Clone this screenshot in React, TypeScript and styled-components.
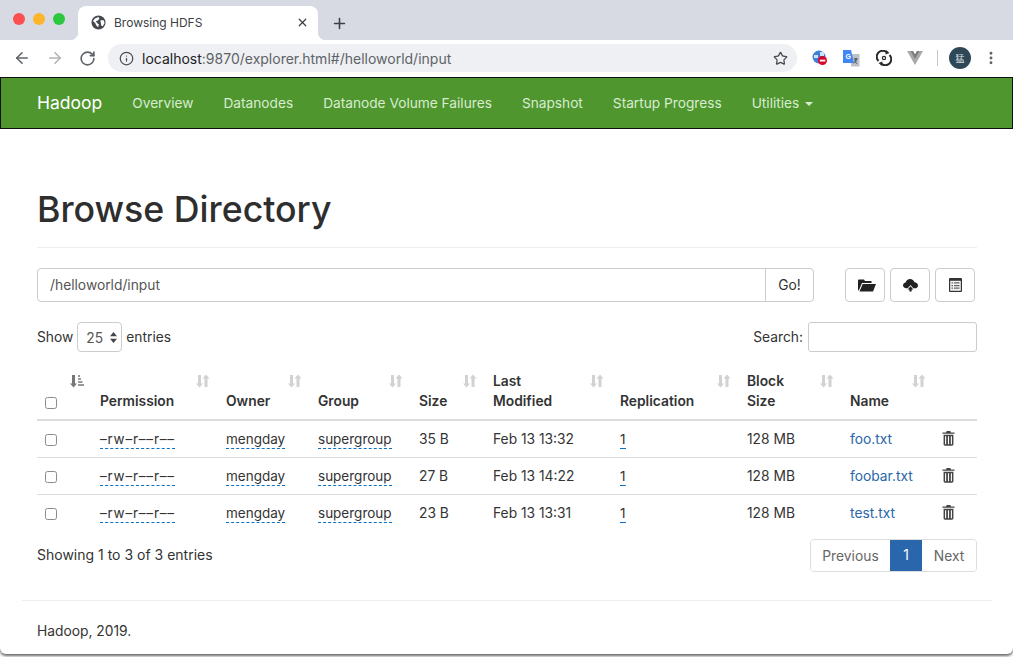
import React from 'react';
import styled, { createGlobalStyle } from 'styled-components';
import { ArrowLeft, ArrowRight, RotateCw, Info, Star, Plus, X, MoreVertical } from 'lucide-react';

const Global = createGlobalStyle`
  html, body { margin: 0; padding: 0; background: #fff; height: 657px; overflow: hidden; }
  * { box-sizing: border-box; }
  body { font-family: Inter, "Liberation Sans", Arial, sans-serif; font-size: 13.8px; color: #333; }
`;

const Windowed = styled.div`
  height: 654px; background: #fff; border-radius: 0 0 6px 6px; overflow: hidden;
  box-shadow: 0 2px 3px 0 rgba(0,0,0,.6);
`;
const TabStrip = styled.div`
  height: 40px; background: #d7dae3; display: flex; align-items: flex-end; padding-left: 13px;
`;
const Lights = styled.div`
  display: flex; gap: 8px; align-self: flex-start; margin-top: 13px; width: 65px;
`;
const Light = styled.span<{ $c: string }>`
  width: 12px; height: 12px; border-radius: 50%; background: ${p => p.$c};
`;
const Tab = styled.div`
  position: relative; width: 240px; height: 34px; background: #fff; border-radius: 8px 8px 0 0;
  display: flex; align-items: center; padding: 0 9px 2px 13px; color: #3c4043; font-size: 12px;
  &::before, &::after { content: ''; position: absolute; bottom: 0; width: 8px; height: 8px; }
  &::before { left: -8px; background: radial-gradient(circle at 0 0, transparent 8px, #fff 8.5px); }
  &::after { right: -8px; background: radial-gradient(circle at 100% 0, transparent 8px, #fff 8.5px); }
`;
const TabTitle = styled.span` margin-left: 8px; flex: 1; `;
const NewTab = styled.div` margin-left: 13px; height: 34px; display: flex; align-items: center; color: #3c4043; `;
const Toolbar = styled.div`
  height: 36px; background: #fff; display: flex; align-items: center; padding: 0 0 0 13px; color: #5f6368;
`;
const NavGlyphs = styled.div` display: flex; align-items: center; gap: 15px; width: 95px; `;
const Omni = styled.div`
  width: 689px; height: 28px; background: #eef0f3; border-radius: 14px; display: flex; align-items: center;
  padding: 0 9px 0 11px; font-size: 14px; color: #5f6368;
`;
const OmniText = styled.span` margin-left: 8px; flex: 1; b { font-weight: 400; color: #202124; } `;
const Exts = styled.div`
  display: flex; align-items: center; margin-left: 15px; height: 100%;
`;
const ExtSlot = styled.span<{ $w: number }>` display: flex; width: ${p => p.$w}px; align-items: center; `;
const Sep = styled.span` width: 1px; height: 16px; background: #c4c6c9; `;
const Avatar = styled.span`
  width: 22px; height: 22px; border-radius: 50%; background: #2f4858; color: #dfe5e8; font-size: 9px;
  display: flex; align-items: center; justify-content: center; margin-left: 11px;
  font-family: "Noto Sans CJK SC", sans-serif;
`;
const Dots = styled.span` display: flex; margin-left: 12px; color: #5f6368; `;

const Navbar = styled.nav`
  margin-top: 1px; height: 52px; background: #4f962f; border: 1px solid #101010; display: flex; align-items: center; padding-left: 36px;
`;
const Brand = styled.a` color: #fff; font-size: 17.5px; margin-right: 15px; line-height: 20px; `;
const NavLink = styled.a`
  color: #d9ecd0; font-size: 13.7px; padding: 0 15px; line-height: 20px; display: flex; align-items: center;
`;
const Caret = styled.i`
  display: inline-block; margin-left: 6px; width: 0; height: 0; margin-top: 2px;
  border-top: 4px solid #d9ecd0; border-left: 4px solid transparent; border-right: 4px solid transparent;
`;
const Container = styled.div` margin: 0 21px 0 22px; `;
const Inner = styled.div` padding: 0 15px; `;
const Header = styled.div` margin-top: 59px; padding-bottom: 16px; border-bottom: 1px solid #eee; `;
const Title = styled.h1` margin: 0; font-size: 35.7px; font-weight: 500; line-height: 43px; color: #2e2e2e; `;
const PathRow = styled.div` display: flex; margin-top: 20px; align-items: center; `;
const PathInput = styled.div`
  width: 729px; height: 34px; border: 1px solid #ccc; border-radius: 4px 0 0 4px; padding: 0 12px;
  line-height: 32px; color: #555;
`;
const GoButton = styled.div`
  width: 49px; height: 34px; margin-left: -1px; border: 1px solid #ccc; border-radius: 0 4px 4px 0;
  text-align: center; line-height: 32px; color: #333;
`;
const Tools = styled.div` display: flex; gap: 5px; margin-left: 31px; `;
const ToolBtn = styled.div`
  width: 40px; height: 34px; border: 1px solid #ccc; border-radius: 4px; display: flex; align-items: center; justify-content: center; color: #222;
`;
const Controls = styled.div` display: flex; justify-content: space-between; align-items: center; margin-top: 20px; height: 30px; `;
const Label = styled.div` display: flex; align-items: center; gap: 4px; line-height: 28px; `;
const SelectBox = styled.div`
  position: relative; width: 45px; height: 30px; border: 1px solid #ccc; border-radius: 4px; padding-left: 8px; line-height: 30px; color: #555;
`;
const SelectArrows = styled.svg` position: absolute; right: 4px; top: 9px; `;
const SearchBox = styled.div` width: 169px; height: 30px; margin-left: 1px; border: 1px solid #ccc; border-radius: 3px; `;
const Table = styled.table`
  width: 940px; border-collapse: collapse; table-layout: fixed; margin-top: 11px;
`;
const Th = styled.th<{ $w: number }>`
  position: relative; width: ${p => p.$w}px; text-align: left; vertical-align: bottom; font-weight: 600;
  padding: 8px 20px 8px 8px; line-height: 20px; border-bottom: 2px solid #ddd; color: #333;
`;
const SortGlyph = styled.svg` position: absolute; right: 8px; top: 11px; `;
const Td = styled.td`
  padding: 8px; line-height: 20px; height: 37px; border-bottom: 1px solid #ddd; vertical-align: top;
  tr:last-child & { border-bottom: none; }
`;
const Check = styled.span`
  display: block; width: 12px; height: 12px; border: 1px solid #8b8b8b; border-radius: 2.5px; background: #fff; margin-top: 5px;
`;
const HeadCheck = styled(Check)` margin-bottom: 2px; `;
const Editable = styled.span`
  font-size: 13.5px; border-bottom: 1px dashed #0c70c4; padding-bottom: 1px;
`;
const Perm = styled(Editable)`
  letter-spacing: .8px;
`;
const NameLink = styled.a` color: #2a66ab; `;
const TrashWrap = styled.span` display: block; height: 15px; margin-top: 2px; `;
const Bottom = styled.div` display: flex; justify-content: space-between; align-items: flex-start; margin-top: 7px; height: 61px; `;
const Info2 = styled.div` font-size: 14px; line-height: 20px; margin-top: 6px; `;
const Pager = styled.div` display: flex; height: 33px; border: 1px solid #ddd; border-radius: 4px; overflow: hidden; color: #666; `;
const PageBtn = styled.div<{ $active?: boolean; $w: number }>`
  width: ${p => p.$w}px; text-align: center; line-height: 33px;
  background: ${p => (p.$active ? '#2a66ab' : '#fff')}; color: ${p => (p.$active ? '#fff' : '#666')};
  margin: ${p => (p.$active ? '-1px 0' : '0')}; height: ${p => (p.$active ? '33px' : 'auto')};
`;
const Foot = styled.footer` border-top: 1px solid #eee; padding: 20px 15px 0; line-height: 20px; `;

const sortIdle = (
  <SortGlyph width="14" height="14" viewBox="0 0 14 14" fill="#d2d2d2">
    <path d="M2 1h3v8.500h2L3.500 13.500 0 9.500h2zM10 .5 13.500 4.500h-2V13h-3V4.500h-2z" />
  </SortGlyph>
);
const sortAsc = (
  <SortGlyph width="14" height="14" viewBox="0 0 14 14">
    <path fill="#777" d="M2 1h3v8.500h2L3.500 13.500 0 9.500h2z" />
    <path fill="#999" d="M8 1h2v2H8zM8 4h3v2H8zM8 7h4.500v2H8zM8 10h6v2H8z" />
  </SortGlyph>
);
const Trash = () => (
  <svg width="13" height="15" viewBox="0 0 14 16" fill="#444">
    <path d="M5 0h4l.6 1.500H13.500v1.500H.5V1.500h3.900zM1.700 4h10.600v10.300c0 .8-.7 1.400-1.500 1.400H3.200c-.8 0-1.500-.6-1.500-1.400z" />
    <path fill="#fff" d="M3.300 5.500h1.200v8.700H3.300zM6.400 5.500h1.200v8.700H6.400zM9.500 5.500h1.200v8.700H9.500z" />
  </svg>
);
const OffsetIcon = styled.span` display: flex; margin-left: 3px; `;

const rows = [
  { size: '35 B', date: 'Feb 13 13:32', name: 'foo.txt' },
  { size: '27 B', date: 'Feb 13 14:22', name: 'foobar.txt' },
  { size: '23 B', date: 'Feb 13 13:31', name: 'test.txt' },
];

export default function App() {
  return (
    <Windowed>
      <Global />
      <TabStrip>
        <Lights>
          <Light $c="#fc4f4f" /><Light $c="#fdb52a" /><Light $c="#2bc73f" />
        </Lights>
        <Tab>
          <svg width="15" height="15" viewBox="0 0 16 16">
            <circle cx="8" cy="8" r="7.500" fill="#45484d" />
            <path fill="#fff" d="M2 6.500 4.500 3.500 8 2 9 4 7 6 5 6.500 7 9 8.500 10 7.500 13 5.500 11 4.500 8.500zM10 5.500l3.500 0 1 3-2 3.500-1.500-.5-.5-3z" />
          </svg>
          <TabTitle>Browsing HDFS</TabTitle>
          <X size={13} color="#3c4043" strokeWidth={2.2} />
        </Tab>
        <NewTab><Plus size={17} strokeWidth={2.2} /></NewTab>
      </TabStrip>
      <Toolbar>
        <NavGlyphs>
          <ArrowLeft size={18} strokeWidth={2.1} />
          <ArrowRight size={18} strokeWidth={2.1} color="#b0b2b5" />
          <RotateCw size={17} strokeWidth={2.3} />
        </NavGlyphs>
        <Omni>
          <Info size={15} strokeWidth={2} color="#4a4d52" />
          <OmniText><b>localhost</b>:9870/explorer.html#/helloworld/input</OmniText>
          <Star size={15} strokeWidth={2} color="#45484d" />
        </Omni>
        <Exts>
          <ExtSlot $w={31}>
            <svg width="16" height="16" viewBox="0 0 16 16">
              <circle cx="7" cy="7" r="6.500" fill="#3f7fd9" />
              <path fill="#cfe0f7" d="M2 5h4v3H2zM8 2h4v4H8z" />
              <circle cx="10.500" cy="10.500" r="4.500" fill="#d9062a" />
              <rect x="7.800" y="9.700" width="5.500" height="1.800" fill="#fff" />
            </svg>
          </ExtSlot>
          <ExtSlot $w={33}>
            <svg width="17" height="17" viewBox="0 0 17 17">
              <path fill="#bcc1c6" d="M8 4h8.500v12.500H8z" />
              <path fill="#5a6068" d="m11 8 3.500 0v1l-1.500 3 1.500 1.500-.7.500-1.600-1.500-1.500 1-.5-.6 1.500-1.200L11.500 9.500z" />
              <path fill="#4285f4" d="M0 0h8l3 13H0z" />
              <text x="2.500" y="9" fontSize="7" fontWeight="700" fill="#fff" fontFamily="Liberation Sans">G</text>
            </svg>
          </ExtSlot>
          <ExtSlot $w={31}>
            <svg width="16" height="16" viewBox="0 0 16 16" fill="none" stroke="#2b2b2b" strokeWidth="2">
              <path d="M2.500 11A6 6 0 0 1 11 2.500" />
              <path d="M13.500 5A6 6 0 0 1 5 13.500" />
              <circle cx="8" cy="8" r="1.600" strokeWidth="1.200" />
              <path fill="#2b2b2b" stroke="none" d="M10 0l3.500 3-4 1.500zM6 16l-3.500-3 4-1.500z" />
            </svg>
          </ExtSlot>
          <ExtSlot $w={30}>
            <svg width="16" height="14" viewBox="0 0 16 14">
              <path fill="#a9a9a9" d="M0 0h6l2 3.500L10 0h6L8 14z" />
              <path fill="#7d7d7d" d="M3.500 0h2.500l2 3.500L10 0h2.500L8 8z" />
            </svg>
          </ExtSlot>
          <Sep />
          <Avatar>猛</Avatar>
          <Dots><MoreVertical size={16} strokeWidth={2.4} /></Dots>
        </Exts>
      </Toolbar>
      <Navbar>
        <Brand>Hadoop</Brand>
        <NavLink>Overview</NavLink>
        <NavLink>Datanodes</NavLink>
        <NavLink>Datanode Volume Failures</NavLink>
        <NavLink>Snapshot</NavLink>
        <NavLink>Startup Progress</NavLink>
        <NavLink>Utilities<Caret /></NavLink>
      </Navbar>
      <Container>
        <Inner>
          <Header><Title>Browse Directory</Title></Header>
          <PathRow>
            <PathInput>/helloworld/input</PathInput>
            <GoButton>Go!</GoButton>
            <Tools>
              <ToolBtn>
                <OffsetIcon>
                <svg width="18" height="14" viewBox="0 0 18 14" fill="#222">
                  <path d="M1 1.500h5l1 1.500h6.500v2H4L.8 12.500C.3 12.500 0 12 0 11.500V2.500C0 2 .5 1.500 1 1.500z" />
                  <path d="M4.700 6H18l-3 7.500H1.500z" />
                </svg>
                </OffsetIcon>
              </ToolBtn>
              <ToolBtn>
                <svg width="15" height="14" viewBox="0 0 16 14" fill="#222">
                  <path d="M3.500 10.500C1.500 10.500 0 9 0 7.300 0 5.700 1.300 4.400 2.800 4.300 3.400 2 5.300.5 7.500.5c2.300 0 4.200 1.500 4.700 3.600C14.300 4.200 16 5.600 16 7.400c0 1.700-1.400 3.100-3.200 3.100h-1.800L8 7l-3 3.500z" />
                  <path d="M8 8.200 11 11.700H9.200V14H6.800v-2.300H5z" />
                </svg>
              </ToolBtn>
              <ToolBtn>
                <svg width="13" height="14" viewBox="0 0 13 14">
                  <rect width="13" height="14" rx="1" fill="#333" />
                  <path fill="#f2f2f2" d="M1.200 2.800h10.600v10H1.200z" />
                  <path fill="#666" d="M2.500 4.300h1.500v1.300H2.500zM5 4.300h5.500v1.300H5zM2.500 6.900h1.500v1.300H2.500zM5 6.900h5.500v1.300H5zM2.500 9.500h1.500v1.300H2.500zM5 9.500h5.500v1.300H5z" />
                </svg>
              </ToolBtn>
            </Tools>
          </PathRow>
          <Controls>
            <Label>Show
              <SelectBox>25
                <SelectArrows width="7" height="11" viewBox="0 0 7 11" fill="#444">
                  <path d="M3.500 0 7 4.300H0zM3.500 11 0 6.700h7z" />
                </SelectArrows>
              </SelectBox>
              entries</Label>
            <Label>Search:<SearchBox /></Label>
          </Controls>
          <Table>
            <thead>
              <tr>
                <Th $w={55}>{sortAsc}<HeadCheck /></Th>
                <Th $w={126}>{sortIdle}Permission</Th>
                <Th $w={92}>{sortIdle}Owner</Th>
                <Th $w={101}>{sortIdle}Group</Th>
                <Th $w={74}>{sortIdle}Size</Th>
                <Th $w={127}>{sortIdle}Last<br />Modified</Th>
                <Th $w={127}>{sortIdle}Replication</Th>
                <Th $w={103}>{sortIdle}Block<br />Size</Th>
                <Th $w={92}>{sortIdle}Name</Th>
                <Th $w={43} />
              </tr>
            </thead>
            <tbody>
              {rows.map(r => (
                <tr key={r.name}>
                  <Td><Check /></Td>
                  <Td><Perm>–rw–r––r––</Perm></Td>
                  <Td><Editable>mengday</Editable></Td>
                  <Td><Editable>supergroup</Editable></Td>
                  <Td>{r.size}</Td>
                  <Td>{r.date}</Td>
                  <Td><Editable>1</Editable></Td>
                  <Td>128 MB</Td>
                  <Td><NameLink>{r.name}</NameLink></Td>
                  <Td><TrashWrap><Trash /></TrashWrap></Td>
                </tr>
              ))}
            </tbody>
          </Table>
          <Bottom>
            <Info2>Showing 1 to 3 of 3 entries</Info2>
            <Pager>
              <PageBtn $w={79}>Previous</PageBtn>
              <PageBtn $w={32} $active>1</PageBtn>
              <PageBtn $w={54}>Next</PageBtn>
            </Pager>
          </Bottom>
        </Inner>
        <Foot>Hadoop, 2019.</Foot>
      </Container>
    </Windowed>
  );
}
